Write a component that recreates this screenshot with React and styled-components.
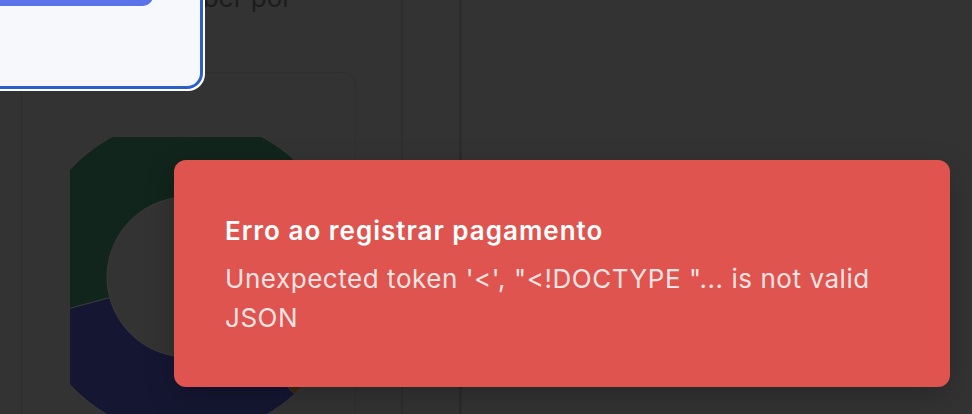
import React from "react";
import styled, { createGlobalStyle } from "styled-components";

const GlobalStyle = createGlobalStyle`
  html, body {
    margin: 0;
    padding: 0;
    background: #333333;
    overflow: hidden;
  }
  body {
    font-family: Inter, "Noto Sans", sans-serif;
  }
`;

const slices = [
  { from: 165, to: 375, color: "#11251c" },
  { from: 15, to: 35, color: "#3a1818" },
  { from: 35, to: 47.5, color: "#392810" },
  { from: 47.5, to: 165, color: "#151632" },
];

const polar = (cx, cy, r, deg) => {
  const a = (deg * Math.PI) / 180;
  return [cx + r * Math.cos(a), cy + r * Math.sin(a)];
};

const arcPath = (cx, cy, r1, r2, from, to) => {
  const [x1, y1] = polar(cx, cy, r2, from);
  const [x2, y2] = polar(cx, cy, r2, to);
  const [x3, y3] = polar(cx, cy, r1, to);
  const [x4, y4] = polar(cx, cy, r1, from);
  const large = to - from > 180 ? 1 : 0;
  return `M${x1} ${y1} A${r2} ${r2} 0 ${large} 1 ${x2} ${y2} L${x3} ${y3} A${r1} ${r1} 0 ${large} 0 ${x4} ${y4} Z`;
};

const Donut = () => (
  <ChartBox>
    <svg width="234" height="280" viewBox="0 0 234 280">
      {slices.map((s, i) => (
        <path
          key={i}
          d={arcPath(117, 140, 80, 159, s.from, s.to)}
          fill={s.color}
          stroke="#3a3a3a"
          strokeWidth="1"
        />
      ))}
    </svg>
  </ChartBox>
);

const App = () => {
  return (
    <>
      <GlobalStyle />
      <Page>
        <LeftColumn>
          <Heading>Contas a receber por</Heading>
          <ChartCard>
            <Donut />
          </ChartCard>
        </LeftColumn>
        <Gutter />
        <SidePanel />
        <MainArea />

        <Modal>
          <ModalButton />
        </Modal>

        <Toast>
          <ToastTitle>Erro ao registrar pagamento</ToastTitle>
          <ToastText>
            Unexpected token '&lt;', "&lt;!DOCTYPE "... is not valid JSON
          </ToastText>
        </Toast>
      </Page>
    </>
  );
};

export default App;

const Page = styled.div`
  position: relative;
  width: 972px;
  height: 414px;
  display: flex;
  overflow: hidden;
  background: #333333;
`;

const LeftColumn = styled.div`
  width: 334px;
  margin-left: 21px;
  border-left: 1px solid #2e2e2e;
  display: flex;
  flex-direction: column;
`;

const Heading = styled.h2`
  margin: -22px 0 0 0;
  padding-left: 10px;
  font-size: 26px;
  font-weight: 400;
  line-height: 39px;
  color: #1c1c1c;
  white-space: nowrap;
`;

const ChartCard = styled.div`
  margin-top: 55px;
  height: 400px;
  border: 1px solid #2f2f2f;
  border-left: none;
  border-radius: 0 14px 0 0;
  padding: 64px 0 0 48px;
`;

const ChartBox = styled.div`
  width: 234px;
  height: 280px;
  overflow: hidden;

  svg {
    display: block;
  }
`;

const Gutter = styled.div`
  width: 45px;
  border-right: 2px solid #2e2e2e;
`;

const SidePanel = styled.div`
  width: 56px;
  border-right: 3px solid #2c2c2c;
`;

const MainArea = styled.div`
  flex: 1;
`;

const Modal = styled.div`
  position: absolute;
  left: -300px;
  top: -100px;
  width: 503px;
  height: 189px;
  padding: 63px 47px 0 24px;
  box-sizing: border-box;
  background: #f7f8fb;
  border: 3px solid #2b5fc9;
  border-radius: 16px;
  box-shadow: 1px 1px 0 1px #ffffff;
`;

const ModalButton = styled.div`
  height: 40px;
  background: #5b73e8;
  border-radius: 10px;
`;

const Toast = styled.div`
  position: absolute;
  left: 174px;
  top: 160px;
  width: 776px;
  box-sizing: border-box;
  padding: 51px 51px 50px;
  background: #df544f;
  border-radius: 12px;
  box-shadow: 0 10px 30px rgba(0, 0, 0, 0.22);
  color: #ffffff;
`;

const ToastTitle = styled.div`
  font-size: 26px;
  font-weight: 600;
  line-height: 39px;
  letter-spacing: 1px;
  margin-bottom: 9px;
`;

const ToastText = styled.div`
  font-size: 26px;
  font-weight: 400;
  line-height: 39px;
  letter-spacing: 0.55px;
  color: rgba(255, 255, 255, 0.86);
`;
